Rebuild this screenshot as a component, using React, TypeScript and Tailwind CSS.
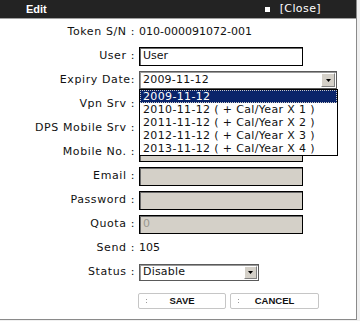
import React from 'react';

const labelCls = 'text-right pr-[4px] tracking-[0.6px] whitespace-nowrap';

function Arrow({ className }: { className: string }) {
  return (
    <span
      className={
        'absolute flex items-center justify-center bg-[#d4d0c8] border border-t-white border-l-white border-r-[#808080] border-b-[#808080] ' +
        className
      }
    >
      <svg width="5" height="3" viewBox="0 0 5 3">
        <path d="M0 0h5L2.5 3z" fill="#000" />
      </svg>
    </span>
  );
}

function Row({ label, children }: { label: string; children?: React.ReactNode }) {
  return (
    <div className="grid grid-cols-[139px_1fr] h-[24px] items-center">
      <div className={labelCls}>{label}</div>
      <div className="flex items-center">{children}</div>
    </div>
  );
}

function Field({ value, disabled }: { value?: string; disabled?: boolean }) {
  return (
    <div
      className={
        'w-[164px] h-[19px] border border-black shadow-[inset_1px_1px_0_#6a6a6a] flex items-center pl-[3px] ' +
        (disabled ? 'bg-[#d4d0c8] text-[#9a9890]' : 'bg-white')
      }
    >
      {value}
    </div>
  );
}

function Btn({ text, w }: { text: string; w: string }) {
  return (
    <button
      className={
        'relative h-[16px] bg-white border border-[#c6c6c6] rounded-[2px] flex items-center justify-center ' + w
      }
    >
      <span className="absolute left-[7px] top-[5px] flex flex-col gap-[2px]">
        <span className="w-[1px] h-[1px] bg-[#9a9a9a]" />
        <span className="w-[1px] h-[1px] bg-[#9a9a9a]" />
      </span>
      <span className="font-['Liberation_Sans',sans-serif] font-bold text-[9.5px] text-[#111]">{text}</span>
    </button>
  );
}

export default function App() {
  const options = [
    '2009-11-12',
    '2010-11-12 ( + Cal/Year X 1 )',
    '2011-11-12 ( + Cal/Year X 2 )',
    '2012-11-12 ( + Cal/Year X 3 )',
    '2013-11-12 ( + Cal/Year X 4 )',
  ];

  return (
    <div className="w-[360px] h-[321px] bg-[#f0f0f0] overflow-hidden font-['DejaVu_Sans',sans-serif] text-[11px] text-[#111]">
      <div className="relative w-[357px] h-[320px] bg-white border-r border-b border-[#8a8a8a]">
        {/* Title bar */}
        <div className="h-[19px] bg-[#232323] border-b border-[#a0a0a0] flex items-center">
          <span className="ml-[26px] font-['Liberation_Sans',sans-serif] font-bold text-[11px] text-white">Edit</span>
          <span className="ml-auto mr-[35px] flex items-center text-white">
            <span className="w-[5px] h-[5px] bg-white" />
            <span className="ml-[10px] tracking-[0.4px]">[Close]</span>
          </span>
        </div>

        {/* Form */}
        <div className="pt-[1px]">
          <Row label="Token S/N :">
            <span>010-000091072-001</span>
          </Row>
          <Row label="User :">
            <Field value="User" />
          </Row>
          <Row label="Expiry Date:">
            <div className="relative w-[198px] h-[18px] bg-white border border-[#5a5a5a] shadow-[inset_1px_1px_0_#9a9a9a] flex items-center pl-[3px] tracking-[0.2px]">
              2009-11-12
              <Arrow className="right-[1px] top-[1px] w-[14px] h-[14px]" />
            </div>
          </Row>
          <Row label="Vpn Srv :" />
          <Row label="DPS Mobile Srv :" />
          <Row label="Mobile No. :">
            <Field disabled />
          </Row>
          <Row label="Email :">
            <Field disabled />
          </Row>
          <Row label="Password :">
            <Field disabled />
          </Row>
          <Row label="Quota :">
            <Field value="0" disabled />
          </Row>
          <Row label="Send :">
            <span>105</span>
          </Row>
          <Row label="Status :">
            <div className="relative w-[120px] h-[17px] bg-white border border-[#5a5a5a] shadow-[inset_1px_1px_0_#9a9a9a] flex items-center pl-[3px] tracking-[0.2px]">
              Disable
              <Arrow className="right-[1px] top-[1px] w-[13px] h-[13px]" />
            </div>
          </Row>
          <div className="grid grid-cols-[138px_1fr] pt-[9px]">
            <div />
            <div className="flex gap-[4px]">
              <Btn text="SAVE" w="w-[88px]" />
              <Btn text="CANCEL" w="w-[89px]" />
            </div>
          </div>
        </div>

        {/* Open dropdown list */}
        <div className="absolute left-[139px] top-[89px] w-[199px] bg-white border border-black">
          {options.map((o, i) => (
            <div
              key={o}
              className={
                'h-[13px] leading-[13px] pl-[3px] tracking-[0.35px] whitespace-nowrap ' +
                (i === 0 ? 'bg-[#0a246a] text-white outline-1 outline-dotted outline-[#c8c8c8] -outline-offset-1' : '')
              }
            >
              {o}
            </div>
          ))}
        </div>
      </div>
    </div>
  );
}
